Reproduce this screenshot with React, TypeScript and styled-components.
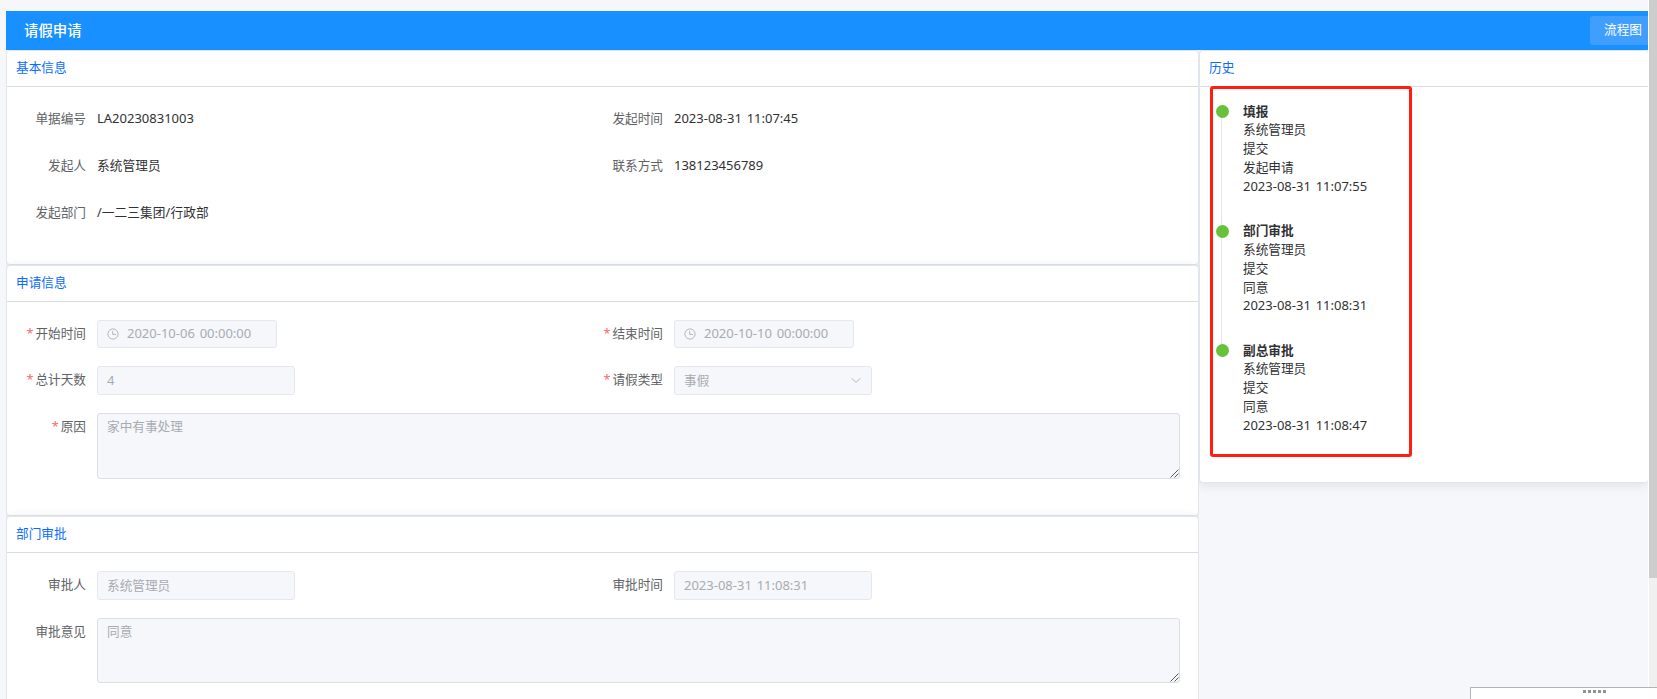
import React from 'react';
import styled, { createGlobalStyle, css } from 'styled-components';

const GlobalStyle = createGlobalStyle`
  * { box-sizing: border-box; }
  html, body { margin: 0; height: 100%; overflow: hidden; background: #f5f7fa; }
  body {
    font-family: 'Noto Sans', 'Noto Sans CJK SC', sans-serif;
    font-size: 12.67px;
    color: #303133;
  }
`;

const Window = styled.div`
  position: relative;
  display: flex;
  width: 1657px;
  height: 699px;
  overflow: hidden;
`;

const Page = styled.main`
  width: 1648px;
  height: 699px;
  padding: 11px 0 0 6px;
  overflow: hidden;
`;

const Scrollbar = styled.div`
  width: 9px;
  border-left: 1px solid #fff;
  background: #f0f0f0;
`;

const Thumb = styled.div`
  height: 578px;
  background: #cdcdcd;
`;

const TitleBar = styled.header`
  display: flex;
  justify-content: space-between;
  height: 39px;
  padding: 5px 0 0 18px;
  background: #1890ff;
  color: #fff;
`;

const Title = styled.h1`
  margin: 0;
  font-size: 14.4px;
  line-height: 29px;
  font-weight: 500;
`;

const FlowButton = styled.button`
  width: 58px;
  height: 29px;
  padding: 0 0 2px 14px;
  border: 0;
  border-radius: 3px 0 0 3px;
  background: #409eff;
  color: #fff;
  font: inherit;
  line-height: 27px;
  text-align: left;
  white-space: nowrap;
`;

const Columns = styled.div`
  display: flex;
  align-items: flex-start;
`;

const FormColumn = styled.div`
  width: 1193px;
  clip-path: inset(0);
`;

const HistoryColumn = styled.div`
  flex: 1;
  min-width: 0;
  clip-path: inset(0 0 -20px 0);
`;

const Card = styled.section<{ $height: number; $open?: boolean }>`
  height: ${(p) => p.$height}px;
  border: 1px solid #e1e6ec;
  ${(p) => p.$open && css`border-right: 0;`}
  border-radius: 4px;
  background: #fff;
  box-shadow: 0 2px 12px 0 rgba(0, 0, 0, 0.1);
`;

const CardHead = styled.h2`
  height: 36px;
  margin: 0;
  padding-left: 9px;
  border-bottom: 1px solid #d9dbdf;
  color: #0a6cff;
  font-size: 12.67px;
  font-weight: 400;
  line-height: 32px;
`;

const Form = styled.div<{ $gap: number }>`
  display: flex;
  flex-direction: column;
  gap: ${(p) => p.$gap}px;
  padding: 18px 18px 0 0;
`;

const Row = styled.div<{ $spaced?: boolean }>`
  display: grid;
  grid-template-columns: 577px 1fr;
  ${(p) => p.$spaced && css`margin-top: 1px;`}
`;

const Item = styled.div<{ $wide?: boolean }>`
  display: flex;
  align-items: flex-start;
  ${(p) => p.$wide && css`grid-column: 1 / -1;`}
`;

const Label = styled.label<{ $required?: boolean }>`
  width: 90px;
  height: 29px;
  padding-right: 11px;
  color: #606266;
  line-height: 27px;
  text-align: right;
  white-space: nowrap;
  ${(p) =>
    p.$required &&
    css`
      &::before {
        content: '*';
        margin-right: 2px;
        color: #f56c6c;
      }
    `}
`;

const Value = styled.span`
  letter-spacing: 0.1px;
  line-height: 27px;
`;

const Latin = styled.span`
  font-size: 13px;
  letter-spacing: 0;
  word-spacing: 1.4px;
`;

const Field = styled.div<{ $w?: number; $h?: number }>`
  display: flex;
  align-items: center;
  width: ${(p) => p.$w ?? 198}px;
  height: ${(p) => p.$h ?? 29}px;
  padding: 0 9px 1px;
  border: 1px solid #e4e7ed;
  border-radius: 3px;
  background: #f5f7fa;
  color: #a8abb2;
  line-height: 25px;
  & > svg:last-child { margin-left: auto; }
`;

const AreaBox = styled.div<{ $h: number }>`
  position: relative;
  flex: 1;
  height: ${(p) => p.$h}px;
  padding: 3px 9px;
  border: 1px solid #dcdfe6;
  border-radius: 3px;
  background: #f5f7fa;
  color: #a8abb2;
  line-height: 19px;
`;

const Grip = styled.svg`
  position: absolute;
  right: 0;
  bottom: 0;
`;

const Timeline = styled.ol`
  position: relative;
  width: 202px;
  height: 371px;
  margin: -1px 0 0 10px;
  padding: 16px 0 0 3px;
  border: 3px solid #ff1e10;
  border-radius: 3px;
  list-style: none;
`;

const Step = styled.li`
  display: flex;
  height: 119.5px;
  line-height: 18.8px;
`;

const Track = styled.div`
  display: flex;
  flex-direction: column;
  align-items: center;
  width: 13px;
  margin-right: 14px;
`;

const Dot = styled.i`
  flex: none;
  width: 13px;
  height: 13px;
  border-radius: 50%;
  background: #67c23a;
`;

const Line = styled.i`
  flex: 1;
  width: 1px;
  margin-right: 2px;
  background: #e1e5ec;
`;

const StepBody = styled.div`
  display: flex;
  flex-direction: column;
  margin-top: -3.4px;
`;

const StepTitle = styled.strong`
  font-weight: 600;
`;

const Dock = styled.div`
  position: absolute;
  left: 1470px;
  top: 687px;
  display: flex;
  gap: 2px;
  width: 187px;
  height: 12px;
  padding: 2px 0 0 112px;
  border: solid #b3b3b6;
  border-width: 1px 0 0 1px;
  background: rgba(255, 255, 255, 0.9);
`;

const Pip = styled.i`
  width: 3px;
  height: 3px;
  background: #929292;
`;

const Clock = styled.svg`
  flex: none;
  margin-right: 8px;
`;

const ClockIcon = () => (
  <Clock width="12" height="12" viewBox="0 0 12 12" fill="none" stroke="#b4b7be">
    <circle cx="6" cy="6" r="5.1" />
    <path d="M5.7 2.9V6.4H9" />
  </Clock>
);

const ChevronIcon = () => (
  <svg width="12" height="12" viewBox="0 0 12 12" fill="none" stroke="#b4b7be">
    <path d="M1.6 4.4L6 8.4L10.4 4.4" />
  </svg>
);

function TextArea({ height, children }: { height: number; children: React.ReactNode }) {
  return (
    <AreaBox $h={height}>
      {children}
      <Grip width="9" height="9" viewBox="0 0 9 9" stroke="#55585c" fill="none">
        <path d="M0.5 8.5L8.5 0.5M4.5 8.5L8.5 4.5" />
      </Grip>
    </AreaBox>
  );
}

const steps = [
  { name: '填报', note: '发起申请', time: '2023-08-31 11:07:55' },
  { name: '部门审批', note: '同意', time: '2023-08-31 11:08:31' },
  { name: '副总审批', note: '同意', time: '2023-08-31 11:08:47' },
];

export default function App() {
  return (
    <Window>
      <GlobalStyle />
      <Page>
        <TitleBar>
          <Title>请假申请</Title>
          <FlowButton>流程图</FlowButton>
        </TitleBar>
        <Columns>
          <FormColumn>
            <Card $height={215}>
              <CardHead>基本信息</CardHead>
              <Form $gap={18}>
                <Row>
                  <Item>
                    <Label>单据编号</Label>
                    <Value><Latin>LA20230831003</Latin></Value>
                  </Item>
                  <Item>
                    <Label>发起时间</Label>
                    <Value><Latin>2023-08-31 11:07:45</Latin></Value>
                  </Item>
                </Row>
                <Row>
                  <Item>
                    <Label>发起人</Label>
                    <Value>系统管理员</Value>
                  </Item>
                  <Item>
                    <Label>联系方式</Label>
                    <Value><Latin>138123456789</Latin></Value>
                  </Item>
                </Row>
                <Row>
                  <Item>
                    <Label>发起部门</Label>
                    <Value>/一二三集团/行政部</Value>
                  </Item>
                </Row>
              </Form>
            </Card>
            <Card $height={251}>
              <CardHead>申请信息</CardHead>
              <Form $gap={17}>
                <Row>
                  <Item>
                    <Label $required>开始时间</Label>
                    <Field $w={180} $h={28}><ClockIcon /><Latin>2020-10-06 00:00:00</Latin></Field>
                  </Item>
                  <Item>
                    <Label $required>结束时间</Label>
                    <Field $w={180} $h={28}><ClockIcon /><Latin>2020-10-10 00:00:00</Latin></Field>
                  </Item>
                </Row>
                <Row>
                  <Item>
                    <Label $required>总计天数</Label>
                    <Field><Latin>4</Latin></Field>
                  </Item>
                  <Item>
                    <Label $required>请假类型</Label>
                    <Field>事假<ChevronIcon /></Field>
                  </Item>
                </Row>
                <Row $spaced>
                  <Item $wide>
                    <Label $required>原因</Label>
                    <TextArea height={66}>家中有事处理</TextArea>
                  </Item>
                </Row>
              </Form>
            </Card>
            <Card $height={251}>
              <CardHead>部门审批</CardHead>
              <Form $gap={18}>
                <Row>
                  <Item>
                    <Label>审批人</Label>
                    <Field>系统管理员</Field>
                  </Item>
                  <Item>
                    <Label>审批时间</Label>
                    <Field><Latin>2023-08-31 11:08:31</Latin></Field>
                  </Item>
                </Row>
                <Row>
                  <Item $wide>
                    <Label>审批意见</Label>
                    <TextArea height={65}>同意</TextArea>
                  </Item>
                </Row>
              </Form>
            </Card>
          </FormColumn>
          <HistoryColumn>
            <Card $height={433} $open>
              <CardHead>历史</CardHead>
              <Timeline>
                {steps.map((s, i) => (
                  <Step key={s.name}>
                    <Track>
                      <Dot />
                      {i < steps.length - 1 && <Line />}
                    </Track>
                    <StepBody>
                      <StepTitle>{s.name}</StepTitle>
                      <span>系统管理员</span>
                      <span>提交</span>
                      <span>{s.note}</span>
                      <Latin>{s.time}</Latin>
                    </StepBody>
                  </Step>
                ))}
              </Timeline>
            </Card>
          </HistoryColumn>
        </Columns>
      </Page>
      <Scrollbar>
        <Thumb />
      </Scrollbar>
      <Dock>
        <Pip /><Pip /><Pip /><Pip /><Pip />
      </Dock>
    </Window>
  );
}
